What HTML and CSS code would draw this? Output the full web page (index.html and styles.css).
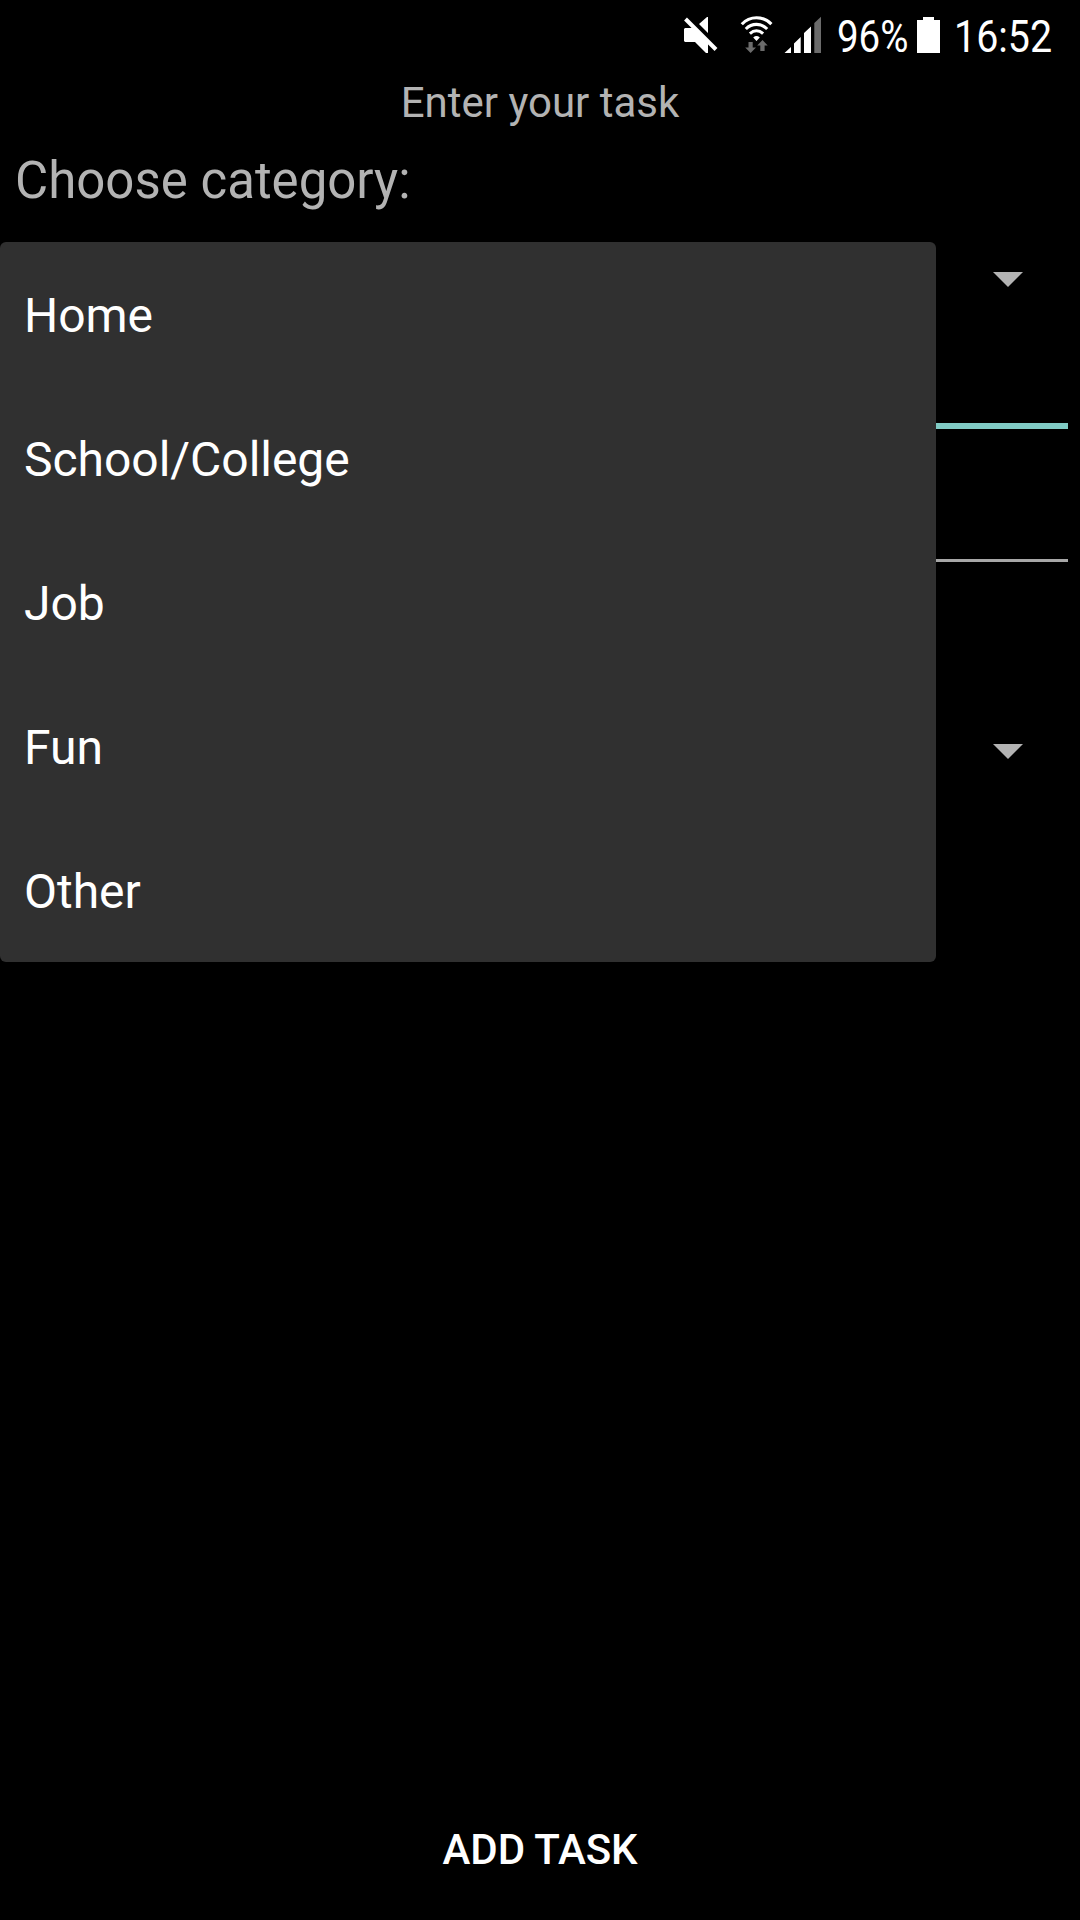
FILE: index.html
```
<!DOCTYPE html>
<html lang="en">
<head>
<meta charset="utf-8">
<title>Enter your task</title>
<link rel="stylesheet" href="styles.css">
</head>
<body>
<div class="screen">
  <header class="status">
    <svg class="status-icons" width="160" height="72" viewBox="670 0 160 72" aria-hidden="true">
      <path d="M685 28H694L708 42V53H706L695 42H685L684 41V29ZM699 24L707 17H708V33Z" fill="#fff"/>
      <path d="M685.5 19L716 49.5" stroke="#fff" stroke-width="4" fill="none"/>
      <g fill="none" stroke="#fff" stroke-width="3.1">
        <path d="M741.8 24.2C750 15.6 763 15.6 771.4 24.2"/>
        <path d="M745.8 29C752 22.8 761 22.8 767.2 29"/>
        <path d="M749.9 33.6C754 30 759 30 763.1 33.6"/>
      </g>
      <path d="M753.2 37.5Q756.5 34.6 759.8 37.5L756.5 41Z" fill="#fff"/>
      <path d="M748.5 42H752.7V47.5H756L750.6 53L745.2 47.5H748.5ZM760.3 51H764.6V45.5H767.7L762.5 40L757.2 45.5H760.3Z" fill="#6b6b6b"/>
      <path d="M784.5 53L791 47V53ZM794 53V43.5L800.7 37V53ZM804 53V33L811 26.5V53Z" fill="#fff"/>
      <path d="M814.3 53V23L821 16.7V53Z" fill="#6b6b6b"/>
    </svg>
    <span class="percent">96%</span>
    <svg class="battery" width="24" height="72" viewBox="0 0 24 72" aria-hidden="true"><path d="M6 17H17V20H23V53H0V20H6Z" fill="#fff"/></svg>
    <span class="clock">16:52</span>
  </header>
  <main class="form">
    <h1 class="title">Enter your task</h1>
    <p class="label">Choose category:</p>
    <div class="spinner"><svg width="30" height="15" viewBox="0 0 30 15"><path d="M0 0H30L15 15Z" fill="#b3b3b3"/></svg></div>
    <div class="field focused"></div>
    <div class="field"></div>
    <div class="spinner last"><svg width="30" height="15" viewBox="0 0 30 15"><path d="M0 0H30L15 15Z" fill="#b3b3b3"/></svg></div>
  </main>
  <button class="add">ADD TASK</button>
  <ul class="menu">
    <li>Home</li>
    <li>School/College</li>
    <li>Job</li>
    <li>Fun</li>
    <li>Other</li>
  </ul>
</div>
</body>
</html>
```
FILE: styles.css
```
* { box-sizing: border-box; margin: 0; padding: 0; }
body { background: #000; font-family: Roboto, sans-serif; }
svg { display: block; flex: none; }
.screen {
  position: relative;
  display: flex;
  flex-direction: column;
  width: 1080px;
  height: 1920px;
  overflow: hidden;
  background: #000;
}
.status { display: flex; height: 72px; padding-left: 670px; color: #fff; }
.percent, .clock {
  flex: none;
  font-size: 45px;
  line-height: 74px;
  white-space: nowrap;
  transform: scaleX(0.875);
  transform-origin: 0 50%;
}
.percent { width: 80px; margin-left: 7px; transform: scaleX(0.855); }
.battery { width: 24px; }
.clock { width: 110px; margin-left: 13px; }
.form { display: flex; flex-direction: column; flex: 1; color: #b3b3b3; }
.title { height: 60px; font-size: 42px; font-weight: 400; line-height: 61px; text-align: center; }
.label { height: 110px; padding-left: 15px; font-size: 51px; line-height: 98px; }
.spinner { display: flex; justify-content: flex-end; height: 72px; padding: 30px 57px 0 0; }
.field { height: 133px; margin: 0 12px; border-bottom: 3px solid #a7a7a7; }
.field.focused { height: 115px; border-bottom: 6px solid #80cbc4; }
.spinner.last { height: 212px; padding-top: 182px; }
.add {
  height: 144px;
  padding-top: 4px;
  border: 0;
  background: transparent;
  color: #fff;
  font: 500 42px/140px Roboto, sans-serif;
  letter-spacing: -0.1px;
}
.menu {
  position: absolute;
  top: 242px;
  left: 0;
  width: 936px;
  background: #303030;
  border-radius: 6px;
  list-style: none;
  color: #fff;
}
.menu li { height: 144px; padding-left: 24px; font-size: 48px; line-height: 147px; letter-spacing: -0.03px; }
```
